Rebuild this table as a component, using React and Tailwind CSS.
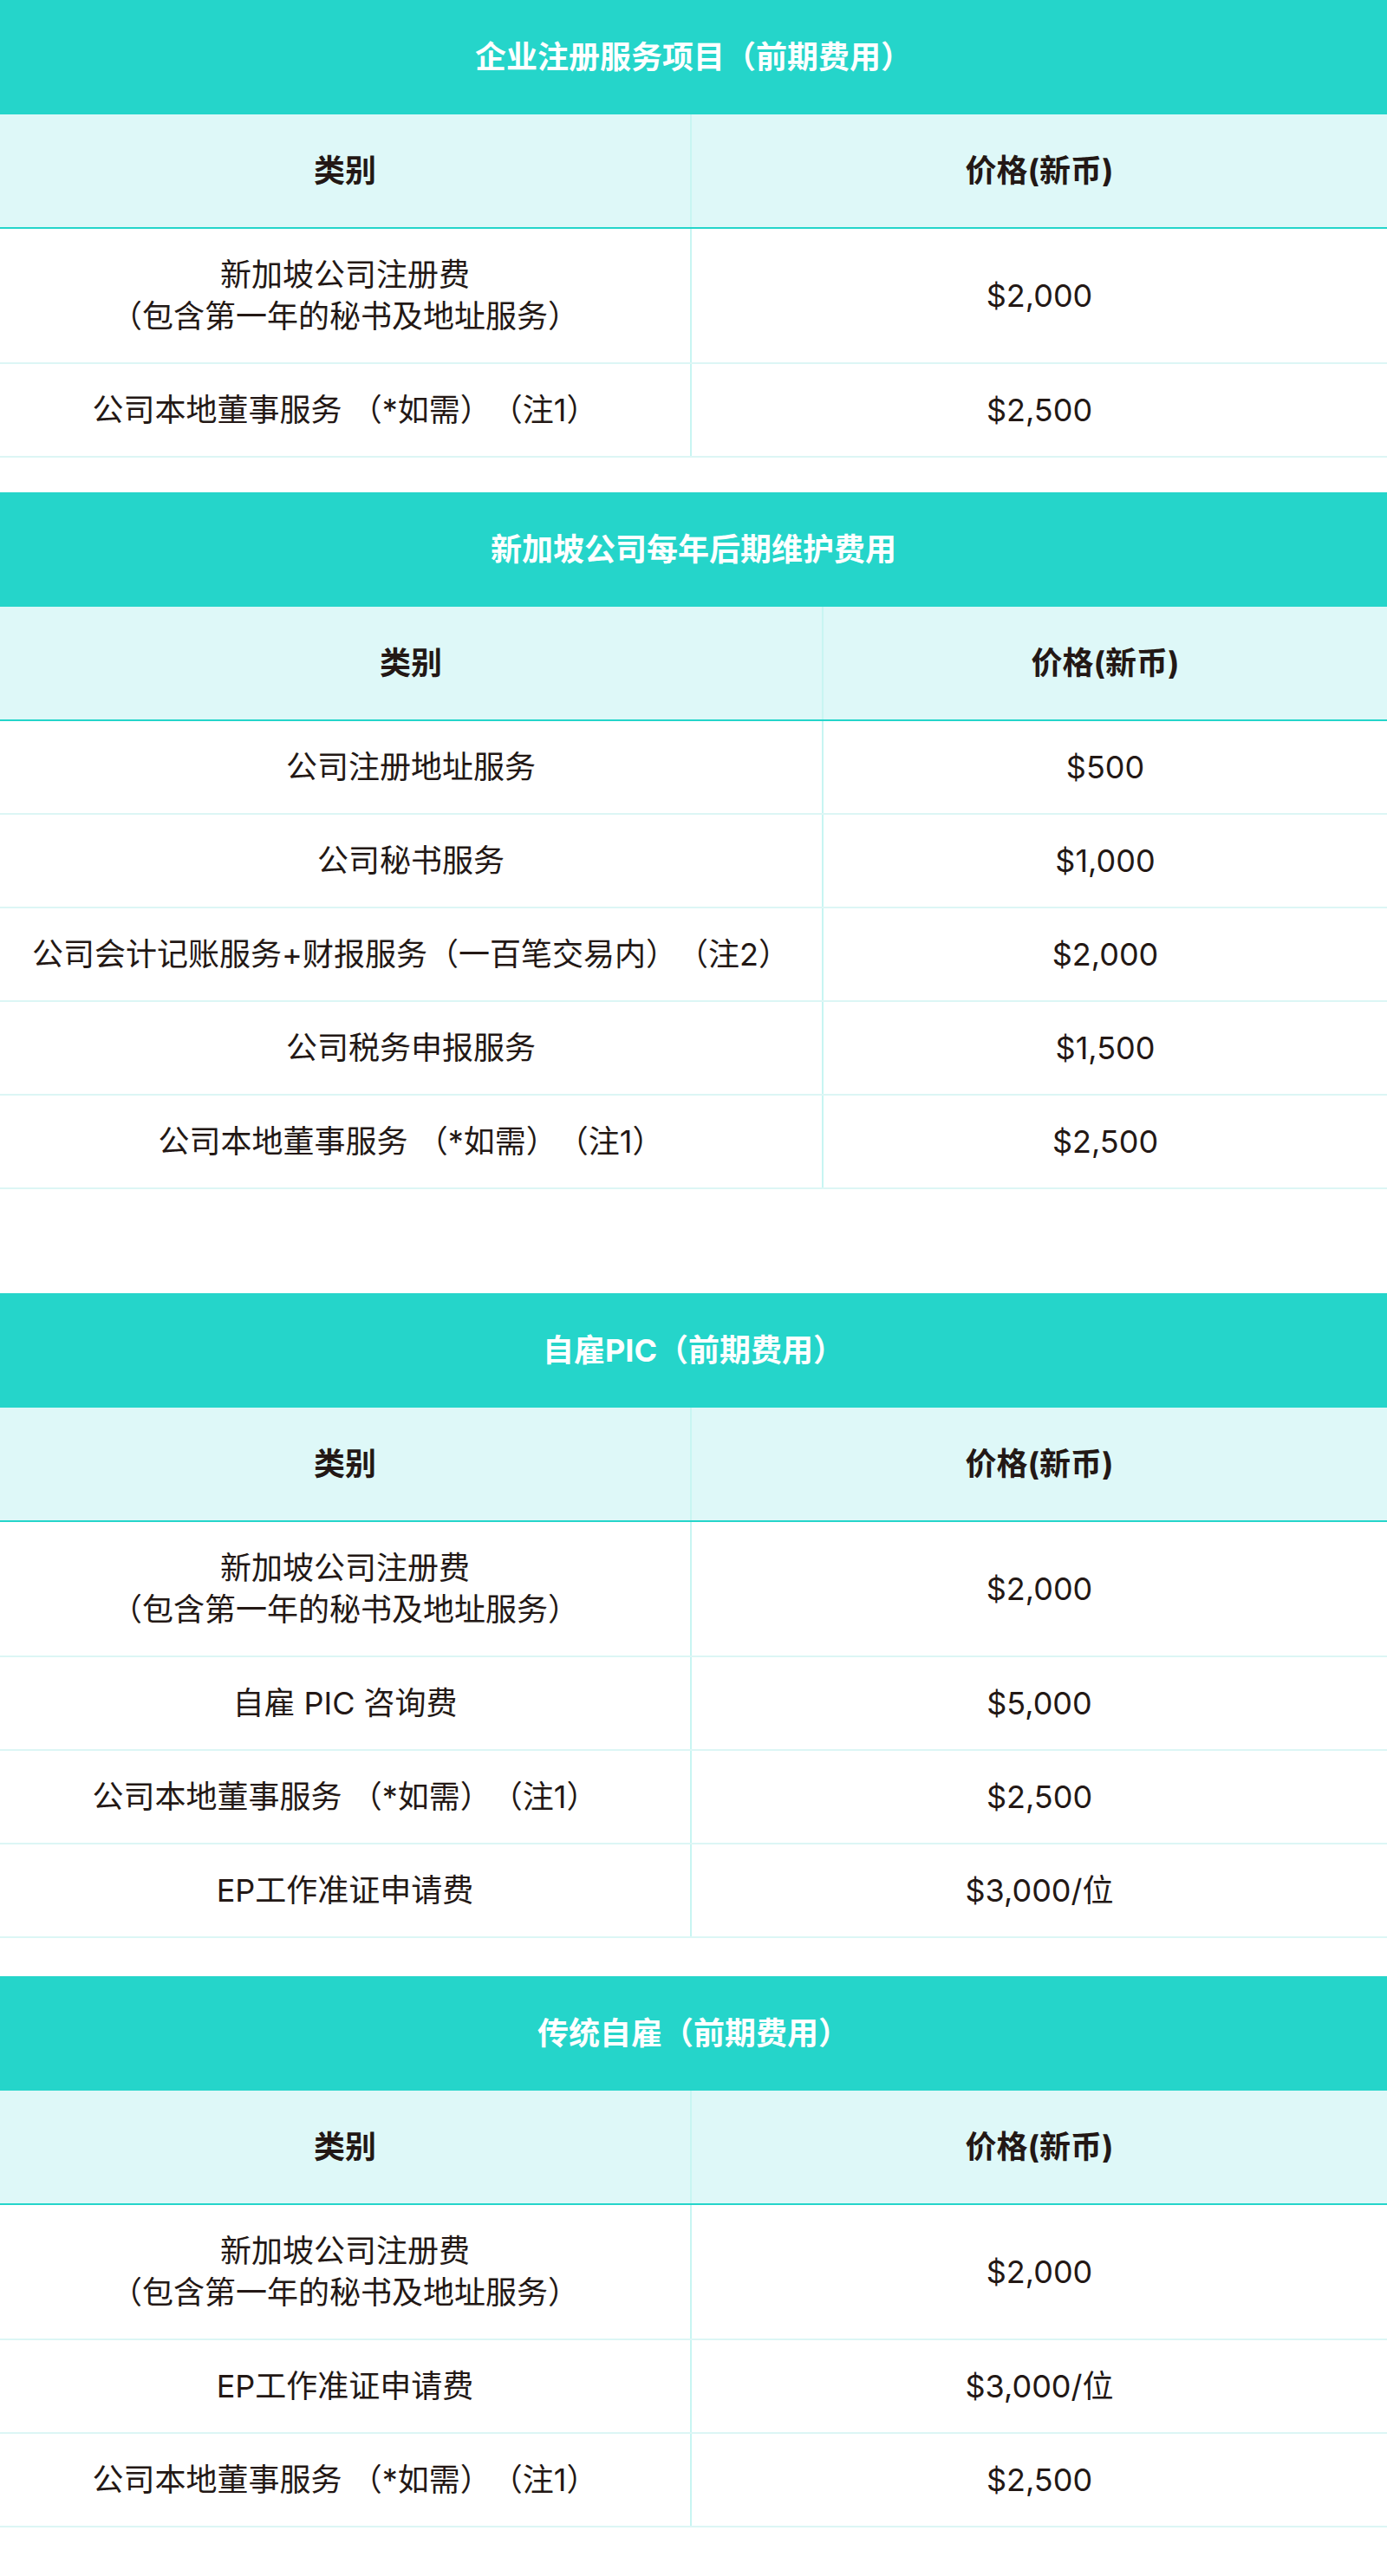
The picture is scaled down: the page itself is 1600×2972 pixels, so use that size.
const sections = [
  {
    title: '企业注册服务项目（前期费用）',
    left: 'w-[798px]',
    rows: [
      { name: ['新加坡公司注册费', '（包含第一年的秘书及地址服务）'], price: '$2,000' },
      { name: ['公司本地董事服务 （*如需）（注1）'], price: '$2,500' },
    ],
  },
  {
    title: '新加坡公司每年后期维护费用',
    left: 'w-[950px]',
    rows: [
      { name: ['公司注册地址服务'], price: '$500' },
      { name: ['公司秘书服务'], price: '$1,000' },
      { name: ['公司会计记账服务+财报服务（一百笔交易内）（注2）'], price: '$2,000' },
      { name: ['公司税务申报服务'], price: '$1,500' },
      { name: ['公司本地董事服务 （*如需）（注1）'], price: '$2,500' },
    ],
  },
  {
    title: '自雇PIC（前期费用）',
    left: 'w-[798px]',
    gap: 'mt-[120px]',
    rows: [
      { name: ['新加坡公司注册费', '（包含第一年的秘书及地址服务）'], price: '$2,000' },
      { name: ['自雇 PIC 咨询费'], price: '$5,000' },
      { name: ['公司本地董事服务 （*如需）（注1）'], price: '$2,500' },
      { name: ['EP工作准证申请费'], price: '$3,000/位' },
    ],
  },
  {
    title: '传统自雇（前期费用）',
    left: 'w-[798px]',
    gap: 'mt-[44px]',
    rows: [
      { name: ['新加坡公司注册费', '（包含第一年的秘书及地址服务）'], price: '$2,000' },
      { name: ['EP工作准证申请费'], price: '$3,000/位' },
      { name: ['公司本地董事服务 （*如需）（注1）'], price: '$2,500' },
    ],
  },
];

function PriceTable({ section, first }) {
  return (
    <section className={first ? '' : section.gap || 'mt-10'}>
      {/* teal title bar */}
      <div className="h-[132px] bg-[#25d5ca] flex items-center justify-center text-white text-[36px] font-bold">
        {section.title}
      </div>

      {/* column header */}
      <div className="flex bg-[#def8f8] border-b-2 border-[#25d5ca]">
        <div className={`${section.left} shrink-0 h-[130px] border-r-2 border-[#c8f5f2] flex items-center justify-center text-[36px] font-bold`}>
          类别
        </div>
        <div className="flex-1 h-[130px] flex items-center justify-center text-[36px] font-bold">
          价格(新币)
        </div>
      </div>

      {section.rows.map((row, i) => (
        <div key={i} className="flex border-b-2 border-[#dcf6f5]">
          <div
            className={`${section.left} shrink-0 ${row.name.length > 1 ? 'h-[154px]' : 'h-[106px]'} border-r-2 border-[#c8f5f2] flex flex-col items-center justify-center text-center leading-[48px] whitespace-pre`}
          >
            {row.name.map((line) => (
              <span key={line}>{line}</span>
            ))}
          </div>
          <div className="flex-1 flex items-center justify-center">{row.price}</div>
        </div>
      ))}
    </section>
  );
}

export default function App() {
  return (
    <div
      className="w-[1600px] min-h-[2972px] bg-white text-[#231815] text-[36px] [text-spacing-trim:space-all]"
      style={{ fontFamily: 'Inter, "Noto Sans CJK SC", sans-serif' }}
    >
      {sections.map((s, i) => (
        <PriceTable key={s.title} section={s} first={i === 0} />
      ))}
    </div>
  );
}
